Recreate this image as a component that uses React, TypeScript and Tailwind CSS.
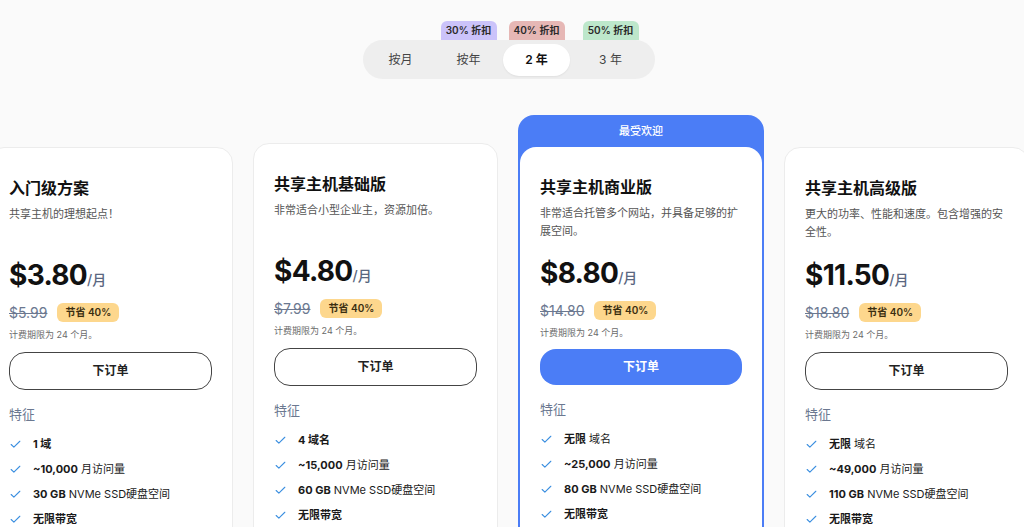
import { Check } from "lucide-react";

interface Feature {
  bold: string;
  rest?: string;
}

interface Plan {
  title: string;
  description: string;
  price: string;
  oldPrice: string;
  features: Feature[];
  popular?: boolean;
  offset: string;
}

const plans: Plan[] = [
  {
    title: "入门级方案",
    description: "共享主机的理想起点！",
    price: "$3.80",
    oldPrice: "$5.99",
    offset: "mt-[32px]",
    features: [
      { bold: "1 域" },
      { bold: "~10,000", rest: " 月访问量" },
      { bold: "30 GB", rest: " NVMe SSD硬盘空间" },
      { bold: "无限带宽" },
    ],
  },
  {
    title: "共享主机基础版",
    description: "非常适合小型企业主，资源加倍。",
    price: "$4.80",
    oldPrice: "$7.99",
    offset: "mt-[28px]",
    features: [
      { bold: "4 域名" },
      { bold: "~15,000", rest: " 月访问量" },
      { bold: "60 GB", rest: " NVMe SSD硬盘空间" },
      { bold: "无限带宽" },
    ],
  },
  {
    title: "共享主机商业版",
    description: "非常适合托管多个网站，并具备足够的扩展空间。",
    price: "$8.80",
    oldPrice: "$14.80",
    popular: true,
    offset: "mt-0",
    features: [
      { bold: "无限", rest: " 域名" },
      { bold: "~25,000", rest: " 月访问量" },
      { bold: "80 GB", rest: " NVMe SSD硬盘空间" },
      { bold: "无限带宽" },
    ],
  },
  {
    title: "共享主机高级版",
    description: "更大的功率、性能和速度。包含增强的安全性。",
    price: "$11.50",
    oldPrice: "$18.80",
    offset: "mt-[32px]",
    features: [
      { bold: "无限", rest: " 域名" },
      { bold: "~49,000", rest: " 月访问量" },
      { bold: "110 GB", rest: " NVMe SSD硬盘空间" },
      { bold: "无限带宽" },
    ],
  },
];

const tabs = [
  { label: "按月", badge: "", badgeColor: "" },
  { label: "按年", badge: "30% 折扣", badgeColor: "bg-[#cbc3fa]" },
  { label: "2 年", badge: "40% 折扣", badgeColor: "bg-[#e6b7b5]" },
  { label: "3 年", badge: "50% 折扣", badgeColor: "bg-[#bde7cb]" },
];

function PlanBody({ plan }: { plan: Plan }) {
  return (
    <div className="px-[20px] pt-[28px] pb-8">
      <h3 className="text-[16px] leading-6 font-bold text-[#111]">{plan.title}</h3>
      <p className="mt-[5px] h-[36px] text-[11px] leading-[18px] text-[#555]">
        {plan.description}
      </p>
      <div className={`flex items-baseline ${plan.popular ? "mt-[15px]" : "mt-4"}`}>
        <span className="text-[28px] leading-9 font-bold text-[#111] tracking-tight">
          {plan.price}
        </span>
        <span className="text-[14px] font-medium text-[#5a6780]">/月</span>
      </div>
      <div className="mt-[9px] flex items-center h-5">
        <span className="text-[14px] text-[#6b7890] line-through">{plan.oldPrice}</span>
        <span className="ml-[10px] h-[19px] px-[8px] rounded-md bg-[#fdd78d] text-[10px] font-semibold text-[#3a2e10] flex items-center">
          节省 40%
        </span>
      </div>
      <p className="mt-[6px] text-[9px] leading-[14px] text-[#6b6b6b]">计费期限为 24 个月。</p>
      <button
        className={
          plan.popular
            ? "mt-[9px] w-full h-[36px] rounded-2xl bg-[#4b7df6] text-white text-[12px] font-semibold"
            : "mt-[10px] w-full h-[38px] rounded-2xl border border-[#444] bg-white text-[#222] text-[12px] font-semibold"
        }
      >
        下订单
      </button>
      <p className="mt-[14px] text-[13px] leading-5 text-[#6b7890]">特征</p>
      <ul className="mt-[11px] flex flex-col gap-[7px]">
        {plan.features.map((f) => (
          <li key={f.bold + (f.rest ?? "")} className="flex items-center h-[18px] text-[11px] text-[#1a1a1a]">
            <Check size={13} strokeWidth={2} className="text-[#3b8fe0] mr-[11px] shrink-0" />
            <span className="whitespace-pre">
              <b className="font-bold">{f.bold}</b>
              {f.rest}
            </span>
          </li>
        ))}
      </ul>
    </div>
  );
}

export default function App() {
  return (
    <div
      className="h-screen w-full overflow-hidden bg-[#fafafa]"
      style={{ fontFamily: "Inter, 'Noto Sans CJK SC', sans-serif" }}
    >
      <div className="flex justify-center pt-[40px] pr-[6px]">
        <div className="relative flex items-center gap-[1px] w-[292px] h-[39px] rounded-full bg-[#eeeeee] pl-[4px]">
          {tabs.map((t, i) => (
            <div
              key={t.label}
              className={`relative w-[67px] h-[32px] flex items-center justify-center rounded-full text-[12px] ${
                i === 3 ? "ml-[6px]" : ""
              } ${
                i === 2
                  ? "bg-white font-semibold text-[#111] shadow-[0_1px_2px_rgba(0,0,0,0.06)]"
                  : "text-[#444]"
              }`}
            >
              {t.label}
              {t.badge && (
                <span
                  className={`absolute bottom-[calc(100%+4px)] left-1/2 -translate-x-1/2 w-[56px] h-[19px] rounded-t-md flex items-center justify-center text-[10px] font-semibold text-[#2a2a2a] whitespace-nowrap ${t.badgeColor}`}
                >
                  {t.badge}
                </span>
              )}
            </div>
          ))}
        </div>
      </div>

      <div className="mt-[36px] flex items-start gap-5 ml-[-12px]">
        {plans.map((plan) =>
          plan.popular ? (
            <div
              key={plan.title}
              className={`shrink-0 w-[246px] rounded-2xl bg-[#4b7df6] px-[2px] ${plan.offset}`}
            >
              <div className="h-[32px] flex items-center justify-center text-[11px] font-medium text-white">
                最受欢迎
              </div>
              <div className="rounded-2xl bg-white">
                <PlanBody plan={plan} />
              </div>
            </div>
          ) : (
            <div
              key={plan.title}
              className={`shrink-0 w-[245px] rounded-2xl border border-[#ececec] bg-white ${plan.offset}`}
            >
              <PlanBody plan={plan} />
            </div>
          )
        )}
      </div>
    </div>
  );
}
